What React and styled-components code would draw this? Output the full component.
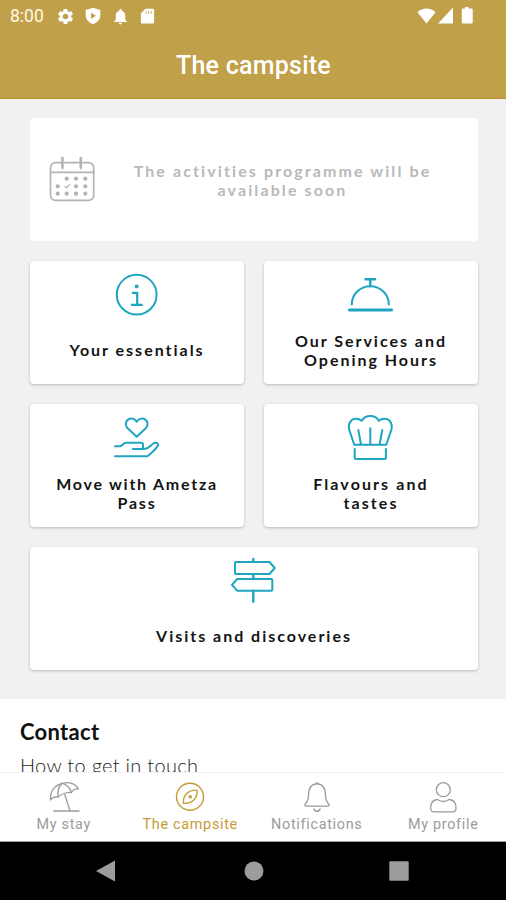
import styled, { createGlobalStyle } from "styled-components";
import { MdNotifications, MdSettings } from "react-icons/md";

const GlobalStyle = createGlobalStyle`
  * {
    box-sizing: border-box;
  }

  body {
    margin: 0;
    background: #000000;
  }
`;

const Screen = styled.div`
  display: flex;
  flex-direction: column;
  width: 506px;
  height: 900px;
  overflow: hidden;
  background: #f1f1f1;
  font-family: "Lato", sans-serif;
`;

const TopBar = styled.header`
  flex: none;
  height: 99px;
  background: #c1a04a;
  border-bottom: 1px solid #b8942a;
  color: #ffffff;
  font-family: "Roboto", sans-serif;
`;

const StatusBar = styled.div`
  display: flex;
  align-items: center;
  justify-content: space-between;
  height: 32px;
  padding: 0 33px 0 10px;
`;

const StatusGroup = styled.div`
  display: flex;
  align-items: center;
  gap: ${({ $gap }) => $gap};

  svg {
    display: block;
    overflow: visible;
  }
`;

const Clock = styled.span`
  width: 37px;
  font-size: 17.5px;
  line-height: 32px;
  color: #fff8e6;
`;

const Title = styled.h1`
  margin: 0;
  padding-left: 1px;
  font-size: 25px;
  font-weight: 500;
  line-height: 67px;
  letter-spacing: 0.25px;
  text-align: center;
`;

const Content = styled.main`
  flex: 1;
  min-height: 0;
  overflow: hidden;
`;

const CardsGrid = styled.section`
  display: grid;
  grid-template-columns: 1fr 1fr;
  grid-auto-rows: 123px;
  gap: 20px;
  padding: 18.5px 28.5px 29.5px 29.5px;
`;

const Card = styled.article`
  grid-column: ${({ $wide }) => ($wide ? "1 / -1" : "auto")};
  display: flex;
  flex-direction: column;
  align-items: center;
  padding: 12px 12px 0;
  border-radius: 4px;
  background: #ffffff;
  box-shadow: 0 1px 3px rgba(0, 0, 0, 0.24);
  color: #1fa5c0;
`;

const DisabledCard = styled(Card)`
  flex-direction: row;
  gap: 14px;
  padding: 0 20px;
  box-shadow: none;
  color: #b4b4b4;
`;

const CardLabel = styled.div`
  flex: 1;
  display: flex;
  align-items: center;
  padding: 0 0 1px 1px;
  color: #141414;
  font-size: 16px;
  font-weight: 700;
  line-height: 19px;
  letter-spacing: ${({ $spacing }) => $spacing || "1.98px"};
  text-align: center;
  white-space: pre-line;
`;

const DisabledLabel = styled(CardLabel)`
  justify-content: center;
  padding: 2px 0 0;
  color: #b9b9b9;
  letter-spacing: 2.1px;
`;

const LineIcon = styled.svg`
  flex: none;
  display: block;
  overflow: visible;
  fill: none;
  stroke: currentColor;
  stroke-width: ${({ $stroke }) => $stroke || 2};
  stroke-linecap: round;
  stroke-linejoin: round;
`;

const Contact = styled.section`
  height: 200px;
  padding: 20px;
  background: #ffffff;

  h2 {
    margin: 0;
    color: #111111;
    font-size: 22px;
    font-weight: 700;
    line-height: 26px;
    letter-spacing: 0.3px;
  }

  p {
    margin: 7px 0 0;
    color: #222222;
    font-size: 20px;
    font-weight: 300;
    line-height: 26px;
    letter-spacing: 0.3px;
  }
`;

const TabBar = styled.nav`
  flex: none;
  display: grid;
  grid-template-columns: repeat(4, 1fr);
  height: 70px;
  border-top: 1px solid #f3f3f3;
  border-bottom: 1px solid #a5a5a5;
  background: #ffffff;
`;

const Tab = styled.div`
  display: flex;
  flex-direction: column;
  align-items: center;
  gap: 3px;
  padding: 9px 0 0 1px;
  color: ${({ $active }) => ($active ? "#c39c35" : "#9b9b9b")};
  font-family: "Roboto", sans-serif;
  font-size: 14.4px;
  line-height: 20px;
  letter-spacing: 0.7px;
`;

const SystemBar = styled.footer`
  flex: none;
  display: flex;
  align-items: center;
  justify-content: space-between;
  height: 58px;
  padding: 0 97px 0 96px;
  background: #000000;

  svg {
    display: block;
    fill: #9c9c9c;
  }
`;

function CalendarIcon() {
  const dots = [
    [16.7, 21.7], [26, 21.7], [35.3, 21.7],
    [7.7, 29.3], [26, 29.3], [35.3, 29.3],
    [7.7, 36.7], [16.7, 36.7], [26, 36.7], [35.3, 36.7],
  ];

  return (
    <LineIcon width="44" height="44" viewBox="0 0 44 44" $stroke={1.7}>
      <rect x="0.5" y="5.7" width="43.2" height="37.6" rx="5" />
      <path d="M.5 15.4h43.2" />
      <path d="M12.4 1v10M30.8 1v10" strokeWidth="2.6" />
      <path d="m15 29.5 1.5 1.3 2.8-3" strokeWidth="1.3" />
      {dots.map(([x, y]) => (
        <circle key={`${x}-${y}`} cx={x} cy={y} r="2.1" fill="currentColor" stroke="none" />
      ))}
    </LineIcon>
  );
}

function InfoIcon() {
  return (
    <LineIcon width="44" height="44" viewBox="0 0 44 44">
      <circle cx="21.7" cy="21.7" r="19.9" />
      <circle cx="21.7" cy="13.4" r="1.9" fill="currentColor" stroke="none" />
      <path d="M18 19.8h4.2v12M17 31.8h9.6" strokeLinecap="square" strokeWidth="2.2" />
    </LineIcon>
  );
}

function ServiceBellIcon() {
  return (
    <LineIcon width="44" height="44" viewBox="0 0 44 44">
      <path d="M16.5 6.2h9.6M21.3 6.2v7" strokeWidth="2.4" />
      <path d="M2.8 31.5a18.5 18.3 0 0 1 37 0" />
      <path d="M.3 37h42.4" strokeWidth="2.8" />
    </LineIcon>
  );
}

function HandHeartIcon() {
  return (
    <LineIcon width="44" height="44" viewBox="0 0 44 44">
      <path d="M21.7 20.8 12.4 12c-2.4-2.6-2-6.4.6-8.4 2.9-2.2 6.8-1.1 8.7 2.2 1.9-3.3 5.8-4.4 8.7-2.2 2.6 2 3 5.8.6 8.4z" />
      <path d="M0 30.3h4.8c2.2 0 3.6-3.5 6.4-3.5H26c1.5 0 2 .7 2 2v4M17.8 32.9h11.5c4.5 0 5.8-3.2 9-5.4 2.2-1.5 5.8-.5 4.4 2.3-1.8 3.8-6.3 6.9-9.2 9.7-.7.6-1.2.8-2 .8H0" />
    </LineIcon>
  );
}

function ChefHatIcon() {
  return (
    <LineIcon width="44" height="44" viewBox="0 0 44 44">
      <path d="M5.3 28.7 1 16C-2 9 1.2 2.7 7 2.7c2.3 0 4.2.6 5.7 2.1C14.5 1.6 17.5 0 21.3 0s6.8 1.6 8.6 4.8c1.5-1.5 3.4-2.1 5.7-2.1 5.8 0 9 6.3 6 13.3l-4.3 12.7z" />
      <path d="m9.3 14 2.6 14M21.3 12.3v16M33.3 14l-2.6 14" />
      <path d="M5.7 33v8.6c0 1 .5 1.5 1.5 1.5h28.2c1 0 1.5-.5 1.5-1.5V33" />
    </LineIcon>
  );
}

function SignpostIcon() {
  return (
    <LineIcon width="44" height="44" viewBox="0 0 44 44">
      <path d="M21.3 0v3M21.3 15v5M21.3 31.7v11" strokeWidth="2.4" />
      <path d="M4 3h33.5L42.7 9l-5.2 6H4a1 1 0 0 1-1-1V4a1 1 0 0 1 1-1z" />
      <path d="M39.3 20H5.3L0 25.9l5.3 5.9h34a1 1 0 0 0 1-1V21a1 1 0 0 0-1-1z" />
    </LineIcon>
  );
}

function ParasolIcon() {
  return (
    <LineIcon width="30" height="30" viewBox="0 0 30 30" $stroke={1.3}>
      <path d="M1.5 18C1 9.5 5.5 3.3 13 1.3 20-.3 26.5 1.5 29.3 7c-2.4-.4-5.2.8-6.8 3.5-3-.8-10.5 1.3-13.5 4.5-3-.5-5.8.5-7.5 3z" />
      <path d="M13 1.3C9.3 5 8.4 10 9 15M13 1.3c4.8 1 8 4.6 9.5 9.2M15.800 12.7 21 28.8M4.8 29h25.3" />
    </LineIcon>
  );
}

function CompassIcon() {
  return (
    <LineIcon width="30" height="30" viewBox="0 0 30 30" $stroke={1.4}>
      <circle cx="15" cy="14.7" r="13.5" />
      <path d="M22 8.2c.6 4-.6 7.3-3.3 9.7-2.7 2.6-6.2 3.7-10.3 3.5-.3-4 .7-7.3 3.3-9.8 2.6-2.4 6.2-3.7 10.3-3.4z" />
      <circle cx="15.2" cy="14.8" r="1.1" />
    </LineIcon>
  );
}

function BellIcon() {
  return (
    <LineIcon width="30" height="30" viewBox="0 0 30 30" $stroke={1.3}>
      <path d="M4 24.2c-1.3 0-1.5-1.4-.7-2.2 2.5-2.6 3.2-4.2 3.2-8.5C6.5 6 9.2 1.8 15 1.8s8.5 4.2 8.5 11.7c0 4.3.7 5.9 3.2 8.5.8.8.6 2.2-.7 2.2zM14 1.2h2M12 27c.3 1.5 1.4 2.3 3 2.3s2.7-.8 3-2.3" />
    </LineIcon>
  );
}

function ProfileIcon() {
  return (
    <LineIcon width="30" height="30" viewBox="0 0 30 30" $stroke={1.3}>
      <circle cx="15.3" cy="7.7" r="7" />
      <path d="M9.5 17.5c3.6 2.5 8 2.5 11.6 0 4.3.4 6.9 3.6 6.9 8.2 0 3-.9 4.1-3 4.1H5.7c-2.1 0-3-1.1-3-4.1 0-4.6 2.5-7.8 6.8-8.2z" />
    </LineIcon>
  );
}

const cards = [
  { label: "Your essentials", Icon: InfoIcon },
  { label: "Our Services and\nOpening Hours", Icon: ServiceBellIcon },
  { label: "Move with Ametza\nPass", Icon: HandHeartIcon, spacing: "1.75px" },
  { label: "Flavours and\ntastes", Icon: ChefHatIcon, spacing: "2.1px" },
  { label: "Visits and discoveries", Icon: SignpostIcon, wide: true },
];

const tabs = [
  { label: "My stay", Icon: ParasolIcon },
  { label: "The campsite", Icon: CompassIcon, active: true },
  { label: "Notifications", Icon: BellIcon },
  { label: "My profile", Icon: ProfileIcon },
];

export default function App() {
  return (
    <Screen>
      <GlobalStyle />
      <TopBar>
        <StatusBar>
          <StatusGroup $gap="9px">
            <Clock>8:00</Clock>
            <MdSettings size={19} />
            <svg width="18" height="18" viewBox="0 0 18 18" fill="#ffffff">
              <path fillRule="evenodd" d="M9 .8 16.3 3v5.5c0 4-3 7.2-7.3 8.7-4.3-1.5-7.3-4.7-7.3-8.7V3zM7 5.7v6l5-3z" />
            </svg>
            <MdNotifications size={19} />
            <svg width="17" height="18" viewBox="0 0 18 18" fill="#ffffff">
              <path fillRule="evenodd" d="M7 1.2h7.5c1 0 1.5.6 1.5 1.5v12.8c0 1-.6 1.5-1.5 1.5h-11c-1 0-1.5-.6-1.5-1.5V6.2zM7 4v2.5h1V4zM9.7 4v2.5h1V4zM12.4 4v2.5h1V4z" />
            </svg>
          </StatusGroup>
          <StatusGroup $gap="2px">
            <svg width="19" height="18" viewBox="0 0 19 18" fill="#ffffff">
              <path d="M9.5 16.5.5 5.2C5.5.3 13.5.3 18.5 5.2z" />
            </svg>
            <svg width="15" height="18" viewBox="0 0 15 18" fill="#ffffff">
              <path d="M0 16.5h15v-16z" />
            </svg>
            <svg width="18" height="18" viewBox="0 0 18 18" fill="#ffffff">
              <path d="M10 0h3.5v1.5h3q1.2 0 1.2 1.2v12.6q0 1.2-1.2 1.2H8q-1.2 0-1.2-1.2V2.7Q6.8 1.5 8 1.5h2z" />
            </svg>
          </StatusGroup>
        </StatusBar>
        <Title>The campsite</Title>
      </TopBar>

      <Content>
        <CardsGrid>
          <DisabledCard $wide>
            <CalendarIcon />
            <DisabledLabel>
              {"The activities programme will be\navailable soon"}
            </DisabledLabel>
          </DisabledCard>
          {cards.map(({ label, Icon, spacing, wide }) => (
            <Card key={label} $wide={wide}>
              <Icon />
              <CardLabel $spacing={spacing}>{label}</CardLabel>
            </Card>
          ))}
        </CardsGrid>

        <Contact>
          <h2>Contact</h2>
          <p>How to get in touch</p>
        </Contact>
      </Content>

      <TabBar>
        {tabs.map(({ label, Icon, active }) => (
          <Tab key={label} $active={active}>
            <Icon />
            {label}
          </Tab>
        ))}
      </TabBar>

      <SystemBar>
        <svg width="22" height="22" viewBox="0 0 22 22">
          <path d="M0 11 19 .5v21z" />
        </svg>
        <svg width="20" height="20" viewBox="0 0 20 20">
          <circle cx="10" cy="10" r="9.5" />
        </svg>
        <svg width="20" height="20" viewBox="0 0 20 20">
          <rect x=".3" y=".3" width="19.4" height="19.4" rx="1" />
        </svg>
      </SystemBar>
    </Screen>
  );
}
